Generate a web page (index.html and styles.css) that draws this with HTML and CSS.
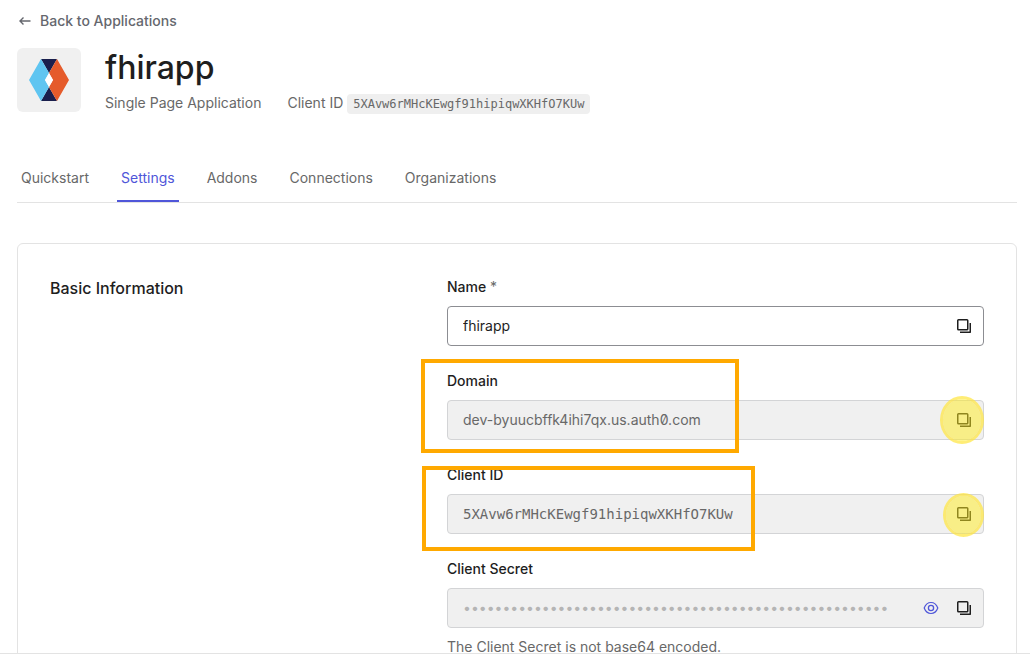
FILE: index.html
```html
<!DOCTYPE html>
<html lang="en">
<head>
<meta charset="utf-8">
<title>fhirapp - Application Settings</title>
<link rel="stylesheet" href="styles.css">
</head>
<body>
<svg class="sprite" aria-hidden="true">
  <symbol id="copy" viewBox="0 0 16 16">
    <rect x="1.750" y="1.750" width="10" height="10" rx="0.800" fill="none" stroke="currentColor" stroke-width="1.500"/>
    <path d="M14.250 5v9.250H4" fill="none" stroke="currentColor" stroke-width="1.500" stroke-linejoin="round"/>
  </symbol>
</svg>
<main class="page">
  <a class="back" href="#">
    <svg class="back-icon" viewBox="0 0 12 12" aria-hidden="true"><path d="M11.500 6H1M4.500 2.500 1 6l3.500 3.500" fill="none" stroke="currentColor" stroke-width="1.400"/></svg>
    Back to Applications
  </a>
  <header class="app">
    <div class="app-logo">
      <svg viewBox="0 0 40 42" aria-hidden="true">
        <path d="M12 0h16l-8 14z" fill="#1a1f4d"/>
        <path d="M12 42h16l-8-14z" fill="#1a1f4d"/>
        <path d="M12 0 0 21l12 21 8-14-4-7 4-7z" fill="#5fc5f1"/>
        <path d="m28 0 12 21-12 21-8-14 4-7-4-7z" fill="#e55b2b"/>
        <path d="m20 14 4 7-4 7-4-7z" fill="#fff"/>
      </svg>
    </div>
    <div class="app-text">
      <h1 class="app-name">fhirapp</h1>
      <div class="app-meta">
        <span>Single Page Application</span>
        <span class="app-id">Client ID <code class="chip">5XAvw6rMHcKEwgf91hipiqwXKHfO7KUw</code></span>
      </div>
    </div>
  </header>
  <nav class="tabs">
    <a class="tab" href="#">Quickstart</a>
    <a class="tab tab-active" href="#" aria-current="page">Settings</a>
    <a class="tab" href="#">Addons</a>
    <a class="tab" href="#">Connections</a>
    <a class="tab" href="#">Organizations</a>
  </nav>
  <section class="card">
    <h2 class="card-title">Basic Information</h2>
    <form class="fields">
      <div class="field">
        <label class="label" for="name">Name <span class="required">*</span></label>
        <div class="control">
          <input class="input" id="name" type="text" value="fhirapp">
          <button class="icon-button" type="button" aria-label="Copy name"><svg class="icon"><use href="#copy"/></svg></button>
        </div>
      </div>
      <div class="field">
        <label class="label" for="domain">Domain</label>
        <div class="control control-locked">
          <input class="input" id="domain" type="text" value="dev-byuucbffk4ihi7qx.us.auth0.com" readonly>
          <button class="icon-button" type="button" aria-label="Copy domain"><svg class="icon"><use href="#copy"/></svg></button>
        </div>
        <div class="frame frame-domain"></div>
        <div class="spot spot-domain"></div>
      </div>
      <div class="field">
        <label class="label" for="client-id">Client ID</label>
        <div class="control control-locked">
          <input class="input input-mono" id="client-id" type="text" value="5XAvw6rMHcKEwgf91hipiqwXKHfO7KUw" readonly>
          <button class="icon-button" type="button" aria-label="Copy client ID"><svg class="icon"><use href="#copy"/></svg></button>
        </div>
        <div class="frame frame-client"></div>
        <div class="spot spot-client"></div>
      </div>
      <div class="field">
        <label class="label" for="secret">Client Secret</label>
        <div class="control control-locked">
          <input class="input input-secret" id="secret" type="text" value="••••••••••••••••••••••••••••••••••••••••••••••••••••••" readonly>
          <button class="icon-button icon-button-accent" type="button" aria-label="Reveal secret"><svg class="icon" viewBox="0 0 16 16"><path d="M1.200 8C2.600 4.300 5 2.500 8 2.500s5.400 1.800 6.800 5.500c-1.400 3.700-3.800 5.500-6.800 5.500S2.600 11.700 1.200 8z" fill="none" stroke="currentColor" stroke-width="1.200"/><circle cx="8" cy="8" r="2.600" fill="none" stroke="currentColor" stroke-width="1.300"/></svg></button>
          <button class="icon-button" type="button" aria-label="Copy secret"><svg class="icon"><use href="#copy"/></svg></button>
        </div>
        <p class="hint">The Client Secret is not base64 encoded.</p>
      </div>
    </form>
  </section>
</main>
</body>
</html>
```
FILE: styles.css
```css
* { box-sizing: border-box; }
body {
  margin: 0;
  height: 100vh;
  padding-bottom: 1px;
  overflow: hidden;
  background: #fff;
  color: #1e1e1e;
  font: 14px/22px Inter, "Liberation Sans", sans-serif;
}
.sprite { position: absolute; width: 0; height: 0; }
.page {
  height: 100%;
  overflow: hidden;
  padding: 10px 13px 0 17px;
  border-bottom: 1px solid #e3e3e3;
}
.back {
  display: flex;
  align-items: center;
  gap: 9px;
  width: fit-content;
  padding-left: 2px;
  color: #65676e;
  font-weight: 500;
  text-decoration: none;
}
.back-icon { width: 12px; height: 12px; }
.app { display: flex; gap: 24px; margin-top: 16px; }
.app-logo {
  display: flex;
  align-items: center;
  justify-content: center;
  width: 64px;
  height: 64px;
  border-radius: 6px;
  background: #f0f0f0;
}
.app-logo svg { width: 40px; height: 42px; }
.app-name { margin: 0; font-size: 32px; line-height: 40px; font-weight: 500; }
.app-meta { display: flex; gap: 26px; margin-top: 4px; color: #686868; }
.chip {
  padding: 3px 6px;
  border-radius: 4px;
  background: #efefef;
  font-family: "DejaVu Sans Mono", monospace;
  font-size: 12px;
}
.tabs { display: flex; gap: 24px; margin-top: 41px; border-bottom: 1px solid #e3e3e3; }
.tab {
  padding: 11px 4px;
  color: #686868;
  text-decoration: none;
  border-bottom: 2px solid transparent;
}
.tab-active { color: #4f56d9; border-color: #4f56d9; }
.card {
  display: grid;
  grid-template-columns: 2fr 3fr;
  gap: 39px;
  margin-top: 40px;
  padding: 32px;
  border: 1px solid #e3e3e3;
  border-radius: 6px;
}
.card-title { margin: 0; font-size: 16px; line-height: 24px; font-weight: 500; }
.fields { display: grid; gap: 24px; }
.field { position: relative; }
.label { display: block; margin-bottom: 8px; font-weight: 500; }
.required { color: #686868; font-weight: 400; }
.control {
  display: flex;
  align-items: center;
  gap: 1px;
  height: 40px;
  padding-right: 3px;
  border: 1px solid #8c8d92;
  border-radius: 4px;
}
.control-locked { border-color: #d3d4d6; background: #f0f0f0; color: #686868; }
.input {
  flex: 1;
  min-width: 0;
  padding: 0 0 0 15px;
  border: 0;
  outline: 0;
  background: none;
  color: inherit;
  font: inherit;
  font-feature-settings: "zero";
}
.input-mono { font-family: "DejaVu Sans Mono", monospace; }
.input-secret { color: #b5b5b5; }
.icon-button {
  display: flex;
  align-items: center;
  justify-content: center;
  width: 32px;
  height: 32px;
  padding: 0;
  border: 0;
  background: none;
  color: #1e1e1e;
}
.icon-button-accent { color: #4f56d9; }
.icon { width: 16px; height: 16px; }
.hint { margin: 8px 0 0; color: #686868; }
.frame { position: absolute; border: 4px solid #ffa900; pointer-events: none; }
.frame-domain { top: -11px; left: -26px; width: 318px; height: 94px; }
.frame-client { top: 2px; left: -25px; width: 333px; height: 85px; }
.spot {
  position: absolute;
  border: 3px solid rgba(255, 230, 60, 0.700);
  border-radius: 50%;
  background: rgba(255, 235, 30, 0.500);
  background-clip: padding-box;
  pointer-events: none;
}
.spot-domain { top: 26px; right: 0; width: 44px; height: 48px; }
.spot-client { top: 29px; right: 0; width: 41px; height: 44px; }
```
